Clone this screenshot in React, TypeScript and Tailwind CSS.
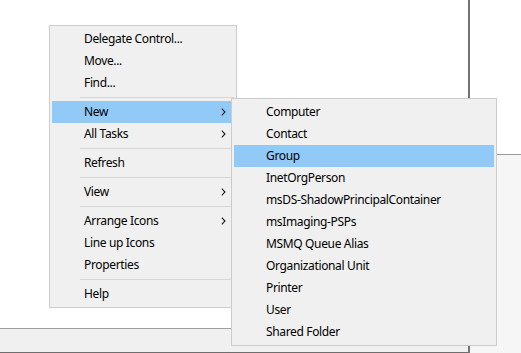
import React from "react";

type Item = { label: string; arrow?: boolean; active?: boolean } | "sep";

const mainItems: Item[] = [
  { label: "Delegate Control..." },
  { label: "Move..." },
  { label: "Find..." },
  "sep",
  { label: "New", arrow: true, active: true },
  { label: "All Tasks", arrow: true },
  "sep",
  { label: "Refresh" },
  "sep",
  { label: "View", arrow: true },
  "sep",
  { label: "Arrange Icons", arrow: true },
  { label: "Line up Icons" },
  { label: "Properties" },
  "sep",
  { label: "Help" },
];

const subItems: Item[] = [
  { label: "Computer" },
  { label: "Contact" },
  { label: "Group", active: true },
  { label: "InetOrgPerson" },
  { label: "msDS-ShadowPrincipalContainer" },
  { label: "msImaging-PSPs" },
  { label: "MSMQ Queue Alias" },
  { label: "Organizational Unit" },
  { label: "Printer" },
  { label: "User" },
  { label: "Shared Folder" },
];

function Chevron() {
  return (
    <svg width="5" height="8" viewBox="0 0 5 8" className="block">
      <path d="M0.8 0.6 L4 4 L0.8 7.4" fill="none" stroke="#1a1a1a" strokeWidth="1.1" />
    </svg>
  );
}

function Menu({ items }: { items: Item[] }) {
  return (
    <div className="flex flex-col">
      {items.map((it, i) =>
        it === "sep" ? (
          <div key={i} className="h-[7px] pt-[3px] pl-[28px]">
            <div className="h-px bg-[#d7d7d7]" />
          </div>
        ) : (
          <div
            key={i}
            className={`h-[22px] flex items-center pl-[32px] pr-[8px] ${it.active ? "bg-[#91c9f7]" : ""}`}
          >
            <span className="flex-1 leading-[22px] whitespace-nowrap tracking-[-0.35px]">{it.label}</span>
            {it.arrow && <Chevron />}
          </div>
        )
      )}
    </div>
  );
}

export default function App() {
  return (
    <div
      className="relative w-[521px] h-[353px] overflow-hidden bg-white text-[12px] text-black"
      style={{ fontFamily: '"Noto Sans", "Open Sans", sans-serif' }}
    >
      <div className="flex w-full h-full">
        <div className="w-[468px] flex flex-col">
          <div className="flex-1 bg-white" />
          <div className="h-[25px] border-t border-[#a0a0a0] border-b border-b-[#6e6e6e] bg-[#f0f0f0]" />
        </div>
        <div className="w-[2px] bg-[#737373]" />
        <div className="flex-1 flex flex-col">
          <div className="h-[154px] bg-white" />
          <div className="flex-1 border-t border-[#9a9a9a] bg-[#f6f6f6]" />
        </div>
      </div>

      <div className="absolute left-[49px] top-[25px] w-[188px] border border-[#cccccc] bg-[#f0f0f0] p-[2px]">
        <Menu items={mainItems} />
      </div>

      <div className="absolute left-[231px] top-[98px] w-[266px] border border-[#cccccc] bg-[#f0f0f0] p-[2px]">
        <Menu items={subItems} />
      </div>
    </div>
  );
}
